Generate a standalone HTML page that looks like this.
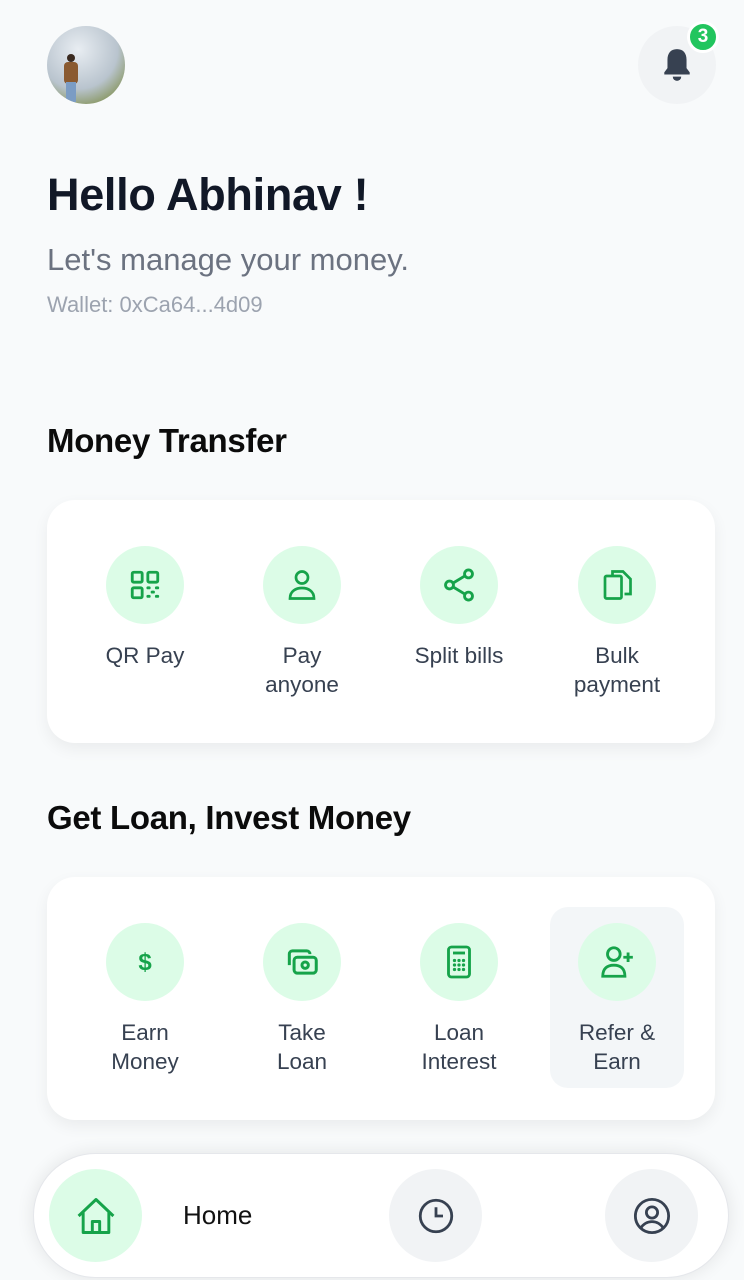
<!DOCTYPE html>
<html><head><meta charset="utf-8"><style>
*{margin:0;padding:0;box-sizing:border-box}
body{width:744px;height:1280px;background:#f8fafb;font-family:"Liberation Sans",sans-serif;position:relative;overflow:hidden}
.abs{position:absolute}
.avatar{left:47px;top:26px;width:78px;height:78px;border-radius:50%;background:radial-gradient(circle at 40% 30%,#e8edf2,#b9c4ce 55%,#8c9a6a 80%,#6f7d4a);overflow:hidden}
.bellc{left:638px;top:26px;width:78px;height:78px;border-radius:50%;background:#f1f3f5}
.badge{left:687px;top:21px;width:32px;height:32px;border-radius:50%;background:#22c55e;border:3px solid #fff;color:#fff;font-weight:bold;font-size:19px;text-align:center;line-height:26px}
h1{position:absolute;left:47px;top:169px;font-size:45px;font-weight:bold;color:#111827;letter-spacing:-0.3px}
.sub{left:47px;top:242px;font-size:31px;color:#6b7280}
.wal{left:47px;top:292px;font-size:22px;color:#9ca3af}
h2{position:absolute;left:47px;font-size:33px;font-weight:bold;color:#0b0b0b;letter-spacing:-0.3px}
.card{position:absolute;left:47px;width:668px;height:243px;background:#fff;border-radius:28px;box-shadow:0 6px 16px rgba(0,0,0,0.06)}
.item{position:absolute;width:140px;margin-left:-70px;text-align:center;font-size:22.5px;line-height:29px;color:#374151}
.circ{width:78px;height:78px;border-radius:50%;background:#dcfce7;margin:0 auto 17px;display:flex;align-items:center;justify-content:center}
.nav{left:33px;top:1153px;width:696px;height:125px;border-radius:63px;background:#fff;box-shadow:0 0 18px rgba(0,0,0,0.09);border:1px solid #e5e7eb}
.nc{position:absolute;width:93px;height:93px;border-radius:50%;display:flex;align-items:center;justify-content:center;top:15px}
</style></head><body>
<div class="abs avatar"><div class="abs" style="left:20px;top:28px;width:8px;height:8px;border-radius:50%;background:#3a2a20"></div><div class="abs" style="left:17px;top:36px;width:14px;height:22px;background:#8a5a30;border-radius:4px"></div><div class="abs" style="left:19px;top:56px;width:10px;height:20px;background:#7b9cc4"></div></div>
<div class="abs bellc"><svg class="abs" style="left:23px;top:21px" width="32" height="36" viewBox="0 0 30 34"><path d="M15 2c-6 0-9 4-9 10v8l-3 4v2h24v-2l-3-4v-8c0-6-3-10-9-10z" fill="#374151"/><path d="M11 28a4 4 0 0 0 8 0z" fill="#374151"/></svg></div>
<div class="abs badge">3</div>
<h1>Hello Abhinav !</h1>
<div class="abs sub">Let's manage your money.</div>
<div class="abs wal">Wallet: 0xCa64...4d09</div>
<h2 style="top:422px">Money Transfer</h2>
<div class="card" style="top:500px">
 <div class="item" style="left:98px;top:46px"><div class="circ"><svg width="34" height="34" viewBox="0 0 24 24" fill="none" stroke="#16a34a" stroke-width="2"><rect x="3" y="3" width="7" height="7" rx="1"/><rect x="14" y="3" width="7" height="7" rx="1"/><rect x="3" y="14" width="7" height="7" rx="1"/><path d="M14 14h1M20 14h1M17 17h1M14 20h1M20 20h1" stroke-linecap="round"/></svg></div>QR Pay</div>
 <div class="item" style="left:255px;top:46px"><div class="circ"><svg width="36" height="36" viewBox="0 0 24 24" fill="none" stroke="#16a34a" stroke-width="1.8"><circle cx="12" cy="7" r="4"/><path d="M4 21c0-5 4-7 8-7s8 2 8 7z"/></svg></div>Pay<br>anyone</div>
 <div class="item" style="left:412px;top:46px"><div class="circ"><svg width="38" height="38" viewBox="0 0 24 24" fill="none" stroke="#16a34a" stroke-width="1.8"><circle cx="18" cy="5" r="2.5"/><circle cx="6" cy="12" r="2.5"/><circle cx="18" cy="19" r="2.5"/><path d="M8.2 10.8l7.6-4.6M8.2 13.2l7.6 4.6"/></svg></div>Split bills</div>
 <div class="item" style="left:570px;top:46px"><div class="circ"><svg width="36" height="36" viewBox="0 0 24 24" fill="none" stroke="#16a34a" stroke-width="1.8"><path d="M9 6V3h7l5 5v10h-4"/><rect x="4" y="6" width="11" height="15" rx="1"/></svg></div>Bulk<br>payment</div>
</div>
<h2 style="top:799px">Get Loan, Invest Money</h2>
<div class="card" style="top:877px">
 <div class="abs" style="left:503px;top:30px;width:134px;height:181px;background:#f3f6f8;border-radius:18px"></div>
 <div class="item" style="left:98px;top:46px"><div class="circ"><span style="color:#16a34a;font-weight:bold;font-size:24px">$</span></div>Earn<br>Money</div>
 <div class="item" style="left:255px;top:46px"><div class="circ"><svg width="38" height="38" viewBox="0 0 24 24" fill="none" stroke="#16a34a" stroke-width="1.9"><path d="M4 14V7a2 2 0 0 1 2-2h9a2 2 0 0 1 2 2"/><rect x="7" y="9" width="14" height="10" rx="2"/><circle cx="14" cy="14" r="2"/></svg></div>Take<br>Loan</div>
 <div class="item" style="left:412px;top:46px"><div class="circ"><svg width="36" height="36" viewBox="0 0 24 24" fill="none" stroke="#16a34a" stroke-width="1.9"><rect x="5" y="2" width="14" height="20" rx="2"/><path d="M8 6h8"/><path d="M9 11h.01M12 11h.01M15 11h.01M9 14h.01M12 14h.01M15 14h.01M9 17h.01M12 17h.01M15 17h.01" stroke-linecap="round" stroke-width="2.2"/></svg></div>Loan<br>Interest</div>
 <div class="item" style="left:570px;top:46px"><div class="circ"><svg width="38" height="38" viewBox="0 0 24 24" fill="none" stroke="#16a34a" stroke-width="1.8"><circle cx="10" cy="7" r="4"/><path d="M3 21c0-5 3-7 7-7s7 2 7 7z"/><path d="M19 6v6M16 9h6"/></svg></div>Refer &amp;<br>Earn</div>
</div>
<div class="abs nav">
 <div class="nc" style="left:15px;background:#dcfce7"><svg width="44" height="44" viewBox="0 0 24 24" fill="none" stroke="#16a34a" stroke-width="1.6" stroke-linejoin="round"><path d="M2.5 12L12 3l9.5 9"/><path d="M5 10v11h14V10"/><path d="M10 21v-6h4v6"/></svg></div>
 <div class="abs" style="left:149px;top:46px;font-size:26px;color:#111">Home</div>
 <div class="nc" style="left:355px;background:#f1f3f5"><svg width="42" height="42" viewBox="0 0 24 24" fill="none" stroke="#374151" stroke-width="1.6"><circle cx="12" cy="12" r="9"/><path d="M12 7v5h4"/></svg></div>
 <div class="nc" style="left:571px;background:#f1f3f5"><svg width="42" height="42" viewBox="0 0 24 24" fill="none" stroke="#374151" stroke-width="1.6"><circle cx="12" cy="12" r="9.5"/><circle cx="12" cy="10" r="3.2"/><path d="M5.5 19c1.5-2.5 4-3.8 6.5-3.8s5 1.3 6.5 3.8"/></svg></div>
</div>
</body></html>
